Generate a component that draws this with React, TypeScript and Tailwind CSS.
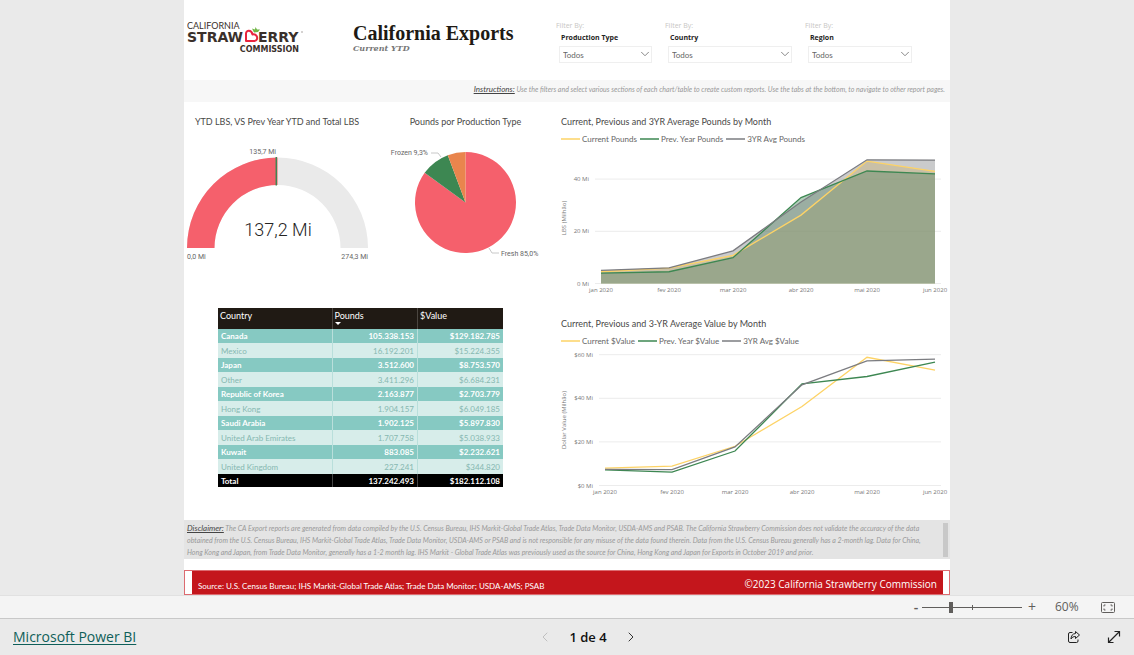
import { useState } from "react";
import { ChevronDown, ChevronLeft, ChevronRight } from "lucide-react";

interface Series {
  name: string;
  color: string;
  values: number[];
}

interface ChartProps {
  title: string;
  axisTitle: string;
  series: Series[];
  xs: number[];
  ticks: { value: number; label: string }[];
  unit: number;
  gridStart: number;
  filled?: boolean;
}

const MONTHS = ["jan 2020", "fev 2020", "mar 2020", "abr 2020", "mai 2020", "jun 2020"];

const YELLOW = "#fdd366";
const GREEN = "#3d8752";
const GRAY = "#7b7c80";

const POUNDS: Series[] = [
  { name: "Current Pounds", color: YELLOW, values: [4.5, 5.9, 10.8, 26.2, 46.9, 43] },
  { name: "Prev. Year Pounds", color: GREEN, values: [4, 4.5, 9.9, 32.9, 43.1, 42] },
  { name: "3YR Avg Pounds", color: GRAY, values: [5, 6, 12.5, 31.2, 47.4, 47.3] },
];

const VALUES: Series[] = [
  { name: "Current $Value", color: YELLOW, values: [8, 8.9, 18, 36.2, 58.8, 52.9] },
  { name: "Prev. Year $Value", color: GREEN, values: [7.2, 6.1, 15.8, 46.6, 50, 56.6] },
  { name: "3YR Avg $Value", color: GRAY, values: [7.4, 7.3, 17.7, 46.2, 57.2, 58] },
];

const ROWS = [
  ["Canada", "105.338.153", "$129.182.785"],
  ["Mexico", "16.192.201", "$15.224.355"],
  ["Japan", "3.512.600", "$8.753.570"],
  ["Other", "3.411.296", "$6.684.231"],
  ["Republic of Korea", "2.163.877", "$2.703.779"],
  ["Hong Kong", "1.904.157", "$6.049.185"],
  ["Saudi Arabia", "1.902.125", "$5.897.830"],
  ["United Arab Emirates", "1.707.758", "$5.038.933"],
  ["Kuwait", "883.085", "$2.232.621"],
  ["United Kingdom", "227.241", "$344.820"],
];

function Logo() {
  return (
    <svg viewBox="0 0 118 34" className="w-[118px] shrink-0" role="img" aria-label="California Strawberry Commission">
      <g fill="#3a302b" className="font-['DejaVu_Sans',sans-serif]">
        <text x="0" y="9" fontSize="9" className="font-['Lato',sans-serif]">CALIFORNIA</text>
        <text x="0" y="22" fontSize="14" fontWeight="700">STRAW</text>
        <text x="71" y="22" fontSize="14" fontWeight="700">ERRY</text>
        <text x="112" y="32" fontSize="8" fontWeight="700" textAnchor="end">COMMISSION</text>
      </g>
      <path
        d="M59 21V13.500C59 10 64.500 9.500 65.500 14.500C70.500 13 72 20.500 67.500 21Z"
        fill="none"
        stroke="#e8253f"
        strokeWidth="2"
        strokeLinejoin="round"
      />
      <path d="M67 12.500L65 8.500L68 9.500L68.500 7L70 9.500L73 9.500L71 12Z" fill="#6fb544" />
      <circle cx="115" cy="12" r="0.700" fill="#8a8480" />
    </svg>
  );
}

function Filter({ id, label, className }: { id: string; label: string; className: string }) {
  return (
    <div className="shrink-0 font-['Open_Sans',sans-serif]">
      <p className="text-[7px] leading-[10px] text-[#c8c6c4]">Filter By:</p>
      <label htmlFor={id} className="mt-[2px] block pl-[5px] text-[7px] leading-[10px] font-bold text-[#252423]">
        {label}
      </label>
      <div className={`relative mt-[3px] ml-[3px] ${className}`}>
        <select
          id={id}
          className="block h-[17px] w-full appearance-none border border-[#efefef] bg-white pl-[3px] font-['Lato',sans-serif] text-[8px] leading-[14px] text-[#666]"
        >
          <option>Todos</option>
        </select>
        <ChevronDown
          className="pointer-events-none absolute top-px right-0 size-[14px] text-[#777]"
          strokeWidth={1.5}
        />
      </div>
    </div>
  );
}

function Gauge() {
  return (
    <section>
      <h2 className="text-center text-[9px] leading-4 text-[#4a4948]">YTD LBS, VS Prev Year YTD and Total LBS</h2>
      <svg viewBox="0 0 186 132" className="mt-4 block w-full font-['Roboto',sans-serif]">
        <path d="M3 102A90.500 90.500 0 0 1 184 102H156.500A63 63 0 0 0 30.500 102Z" fill="#eaeaea" />
        <path d="M3 102A90.500 90.500 0 0 1 93.500 11.500V39A63 63 0 0 0 30.500 102Z" fill="#f5606c" />
        <path d="M92.300 11V39.500" stroke="#3d8752" strokeWidth="1.500" />
        <text x="92" y="8" fontSize="7" fill="#666" textAnchor="end">135,7 Mi</text>
        <text x="94" y="90" fontSize="18" fontWeight="300" fill="#252423" textAnchor="middle">137,2 Mi</text>
        <text x="3" y="113" fontSize="7" fill="#666">0,0 Mi</text>
        <text x="184" y="113" fontSize="7" fill="#666" textAnchor="end">274,3 Mi</text>
      </svg>
    </section>
  );
}

const PIE = [
  { name: "Fresh", share: 0.85, color: "#f5606c" },
  { name: "Frozen", share: 0.093, color: "#3d8752" },
  { name: "Other", share: 0.057, color: "#e9854d" },
];

function Pie() {
  const cx = 95.5;
  const cy = 56.5;
  const r = 50.5;
  const point = (t: number) =>
    `${cx + r * Math.sin(t * 2 * Math.PI)} ${cy - r * Math.cos(t * 2 * Math.PI)}`;

  return (
    <section>
      <h2 className="pl-[5px] text-center text-[9px] leading-4 text-[#4a4948]">Pounds por Production Type</h2>
      <svg viewBox="0 0 186 132" className="mt-4 block w-full font-['Roboto',sans-serif]">
        {PIE.map((slice, i) => {
          const start = PIE.slice(0, i).reduce((sum, s) => sum + s.share, 0);
          const end = start + slice.share;
          return (
            <path
              key={slice.name}
              d={`M${cx} ${cy}L${point(start)}A${r} ${r} 0 ${slice.share > 0.5 ? 1 : 0} 1 ${point(end)}Z`}
              fill={slice.color}
            />
          );
        })}
        <path d="M61 7H68L71 11" fill="none" stroke="#c8c8c8" />
        <path d="M119 102L122 107H129" fill="none" stroke="#c8c8c8" />
        <text x="58" y="9" fontSize="7" fill="#666" textAnchor="end">Frozen 9,3%</text>
        <text x="131" y="110" fontSize="7" fill="#666">Fresh 85,0%</text>
      </svg>
    </section>
  );
}

function MonthChart({ title, axisTitle, series, xs, ticks, unit, gridStart, filled }: ChartProps) {
  const zero = 136.5;
  const y = (v: number) => zero - v * unit;
  const line = (s: Series) => s.values.map((v, i) => `${xs[i]},${y(v)}`).join(" ");

  return (
    <section>
      <h2 className="pl-[5px] text-[9px] leading-4 text-[#4a4948]">{title}</h2>
      <ul className="mt-px flex gap-[3px] pl-[5px] text-[8px] leading-4 text-[#666]">
        {series.map((s) => (
          <li key={s.name} className="flex items-center gap-[2px]">
            <svg viewBox="0 0 19 2" className="w-[19px]">
              <path d="M0 1H19" stroke={s.color} strokeWidth="1.500" />
            </svg>
            {s.name}
          </li>
        ))}
      </ul>
      <svg viewBox="0 0 394 150" className="block w-full font-['Open_Sans',sans-serif]">
        {ticks.map((t) => (
          <g key={t.label}>
            <path d={`M${gridStart} ${y(t.value)}H385`} stroke="#ececec" />
            <text x={gridStart - 6} y={y(t.value) + 2} fontSize="6" fill="#777" textAnchor="end">
              {t.label}
            </text>
          </g>
        ))}
        {filled &&
          series.map((s) => (
            <polygon
              key={s.name}
              points={`${xs[0]},${zero} ${line(s)} ${xs[5]},${zero}`}
              fill={s.color}
              fillOpacity="0.4"
            />
          ))}
        {series.map((s) => (
          <polyline key={s.name} points={line(s)} fill="none" stroke={s.color} strokeWidth="1.300" />
        ))}
        {MONTHS.map((m, i) => (
          <text key={m} x={xs[i]} y="145" fontSize="6" fill="#777" textAnchor="middle">
            {m}
          </text>
        ))}
        <text transform="translate(10 71) rotate(-90)" fontSize="6" fill="#777" textAnchor="middle">
          {axisTitle}
        </text>
      </svg>
    </section>
  );
}

function CountryTable() {
  return (
    <table className="mr-[53px] ml-[34px] w-[285px] table-fixed border-collapse text-[8px] leading-[12px]">
      <colgroup>
        <col className="w-[40%]" />
        <col className="w-[30%]" />
        <col className="w-[30%]" />
      </colgroup>
      <thead>
        <tr className="h-[21px] bg-[#201a14] text-left align-top text-[9px] text-white">
          <th className="px-[2px] pt-[2px] font-normal">Country</th>
          <th className="border-l border-[#4b4640] px-[2px] pt-[2px] font-normal">
            Pounds
            <svg viewBox="0 0 6 3" className="block w-[6px]">
              <path d="M0 0H6L3 3Z" fill="#fff" />
            </svg>
          </th>
          <th className="border-l border-[#4b4640] px-[2px] pt-[2px] font-normal">$Value</th>
        </tr>
      </thead>
      <tbody>
        {ROWS.map(([country, pounds, value], i) => (
          <tr
            key={country}
            className={
              i % 2 === 0
                ? "h-[14px] bg-[#86c9c2] font-bold text-white"
                : "h-[15px] bg-[#d7edea] text-[#86b8b1]"
            }
          >
            <td className="px-[3px]">{country}</td>
            <td className="border-l border-[#b9dfdb] px-[3px] text-right">{pounds}</td>
            <td className="border-l border-[#b9dfdb] px-[3px] text-right">{value}</td>
          </tr>
        ))}
      </tbody>
      <tfoot>
        <tr className="h-[13px] bg-black font-bold text-white">
          <td className="px-[3px]">Total</td>
          <td className="border-l border-[#444] px-[3px] text-right">137.242.493</td>
          <td className="border-l border-[#444] px-[3px] text-right">$182.112.108</td>
        </tr>
      </tfoot>
    </table>
  );
}

function ZoomBar() {
  const [zoom, setZoom] = useState(28);

  return (
    <div className="flex h-6 items-center justify-end border-y border-t-[#e1e1e1] border-b-[#c8c8c8] bg-[#f4f4f4] pr-[19px] text-[#605e5c]">
      <button aria-label="Zoom out" className="w-[10px] text-[14px] leading-4 font-semibold">-</button>
      <div className="relative mr-[3px] ml-px flex w-[100px] items-center">
        <span className="absolute left-1/2 h-[5px] w-px bg-[#605e5c]" />
        <input
          type="range"
          aria-label="Zoom"
          value={zoom}
          onChange={(e) => setZoom(Number(e.target.value))}
          className="h-px w-full appearance-none bg-[#605e5c] [&::-webkit-slider-thumb]:h-[11px] [&::-webkit-slider-thumb]:w-1 [&::-webkit-slider-thumb]:appearance-none [&::-webkit-slider-thumb]:bg-[#605e5c]"
        />
      </div>
      <button aria-label="Zoom in" className="ml-px w-3 text-[14px] leading-4">+</button>
      <span className="ml-[17px] w-7 text-[12px] leading-4">60%</span>
      <button aria-label="Fit to page" className="ml-[18px]">
        <svg viewBox="0 0 14 11" className="w-[14px]" fill="none" stroke="#605e5c">
          <rect x="0.500" y="0.500" width="13" height="10" rx="1" />
          <path d="M3 4.500V3H4.500M9.500 3H11V4.500M11 6.500V8H9.500M4.500 8H3V6.500" />
        </svg>
      </button>
    </div>
  );
}

function StatusBar() {
  return (
    <div className="grid h-9 grow grid-cols-3 items-center bg-[#eaeaea] px-[13px]">
      <a
        href="#powerbi"
        className="justify-self-start text-[14px] leading-5 text-[#0f5f59] underline underline-offset-2"
      >
        Microsoft Power BI
      </a>
      <div className="ml-[42px] flex items-center justify-center gap-4 justify-self-center">
        <button aria-label="Previous page" disabled className="text-[#c0c0c0]">
          <ChevronLeft className="size-4" strokeWidth={1.5} />
        </button>
        <span className="text-[13px] leading-5 font-semibold text-[#111]">1 de 4</span>
        <button aria-label="Next page" className="text-[#333]">
          <ChevronRight className="size-4" strokeWidth={1.5} />
        </button>
      </div>
      <div className="flex items-center gap-[26px] justify-self-end">
        <button aria-label="Share">
          <svg viewBox="0 0 14 14" className="w-[14px]" fill="none" stroke="#222" strokeLinejoin="round">
            <path d="M5.500 2.500H3A1.500 1.500 0 0 0 1.500 4V11A1.500 1.500 0 0 0 3 12.500H9.500A1.500 1.500 0 0 0 11 11V9.500" />
            <path d="M8.500 1.500L12.500 5L8.500 8.500V6.500C6.500 6.500 5 7.200 4 9C4 6 5.500 3.700 8.500 3.500Z" />
          </svg>
        </button>
        <button aria-label="Full screen">
          <svg viewBox="0 0 14 14" className="w-[14px]" fill="none" stroke="#222" strokeWidth="1.200">
            <path d="M1.500 12.500L12.500 1.500M7.500 1.500H12.500V6.500M1.500 7.500V12.500H6.500" />
          </svg>
        </button>
      </div>
    </div>
  );
}

export default function App() {
  return (
    <div className="flex min-h-screen flex-col bg-[#eaeaea] font-['Open_Sans','Noto_Sans',sans-serif]">
      <main className="mx-auto w-full max-w-[766px] bg-white font-['Lato',sans-serif]">
        <header className="flex h-20 items-start justify-between pr-[38px] pl-[3px]">
          <div className="flex">
            <div className="pt-5">
              <Logo />
            </div>
            <div className="ml-12 pt-[22px]">
              <h1 className="font-['Liberation_Serif',serif] text-[20px] leading-[22px] font-bold whitespace-nowrap text-[#201a14]">
                California Exports
              </h1>
              <p className="font-['DejaVu_Serif',serif] text-[8px] leading-[8px] font-bold text-[#777] italic">
                Current YTD
              </p>
            </div>
          </div>
          <div className="flex gap-[13px] pt-[21px]">
            <Filter id="production-type" label="Production Type" className="w-[93px]" />
            <Filter id="country" label="Country" className="w-[124px]" />
            <Filter id="region" label="Region" className="w-[104px]" />
          </div>
        </header>

        <p className="h-[22px] bg-[#f7f7f7] pr-[5px] text-right text-[7px] leading-[19px] text-[#999] italic">
          <span className="text-[8px] text-[#444] underline">Instructions:</span> Use the filters and select various
          sections of each chart/table to create custom reports. Use the tabs at the bottom, to navigate to other report
          pages.
        </p>

        <div className="grid grid-cols-[372fr_394fr] pt-3 pb-[21px]">
          <div>
            <div className="grid grid-cols-2">
              <Gauge />
              <Pie />
            </div>
            <div className="mt-[30px]">
              <CountryTable />
            </div>
          </div>
          <div className="flex flex-col gap-[19px]">
            <MonthChart
              title="Current, Previous and 3YR Average Pounds by Month"
              axisTitle="LBS (Milhão)"
              series={POUNDS}
              xs={[45, 113, 177, 245, 311, 379]}
              ticks={[
                { value: 0, label: "0 Mi" },
                { value: 20, label: "20 Mi" },
                { value: 40, label: "40 Mi" },
              ]}
              unit={2.61}
              gridStart={39}
              filled
            />
            <MonthChart
              title="Current, Previous and 3-YR Average Value by Month"
              axisTitle="Dollar Value (Milhão)"
              series={VALUES}
              xs={[49, 116, 179, 246, 311, 379]}
              ticks={[
                { value: 0, label: "$0 Mi" },
                { value: 20, label: "$20 Mi" },
                { value: 40, label: "$40 Mi" },
                { value: 60, label: "$60 Mi" },
              ]}
              unit={2.18}
              gridStart={43}
            />
          </div>
        </div>

        <div className="flex justify-between bg-[#e4e4e4] pt-[2px] pr-[2px] pb-px pl-[3px]">
          <p className="text-[7px] leading-[12px] text-[#999] italic">
            <span className="text-[8px] leading-[10px] text-[#444] underline">Disclaimer:</span> The CA Export reports
            are generated from data compiled by the U.S. Census Bureau, IHS Markit-Global Trade Atlas, Trade Data
            Monitor, USDA-AMS and PSAB. The California Strawberry Commission does not validate the accuracy of the data
            <br />
            obtained from the U.S. Census Bureau, IHS Markit-Global Trade Atlas, Trade Data Monitor, USDA-AMS or PSAB and
            is not responsible for any misuse of the data found therein. Data from the U.S. Census Bureau generally has a
            2-month lag. Data for China,
            <br />
            Hong Kong and Japan, from Trade Data Monitor, generally has a 1-2 month lag. IHS Markit - Global Trade Atlas
            was previously used as the source for China, Hong Kong and Japan for Exports in October 2019 and prior.
          </p>
          <div className="my-px w-[5px] shrink-0 bg-[#c8c8c8]" />
        </div>

        <footer className="mt-[11px] border border-[#dc6b70] pr-[6px] pl-[7px]">
          <div className="flex h-[23px] items-center justify-between bg-[#c4161c] px-[6px] text-white">
            <span className="pt-[7px] text-[8px] leading-4">
              Source: U.S. Census Bureau; IHS Markit-Global Trade Atlas; Trade Data Monitor; USDA-AMS; PSAB
            </span>
            <span className="pt-[3px] font-['Open_Sans',sans-serif] text-[10px] leading-4">
              ©2023 California Strawberry Commission
            </span>
          </div>
        </footer>
      </main>
      <ZoomBar />
      <StatusBar />
    </div>
  );
}
